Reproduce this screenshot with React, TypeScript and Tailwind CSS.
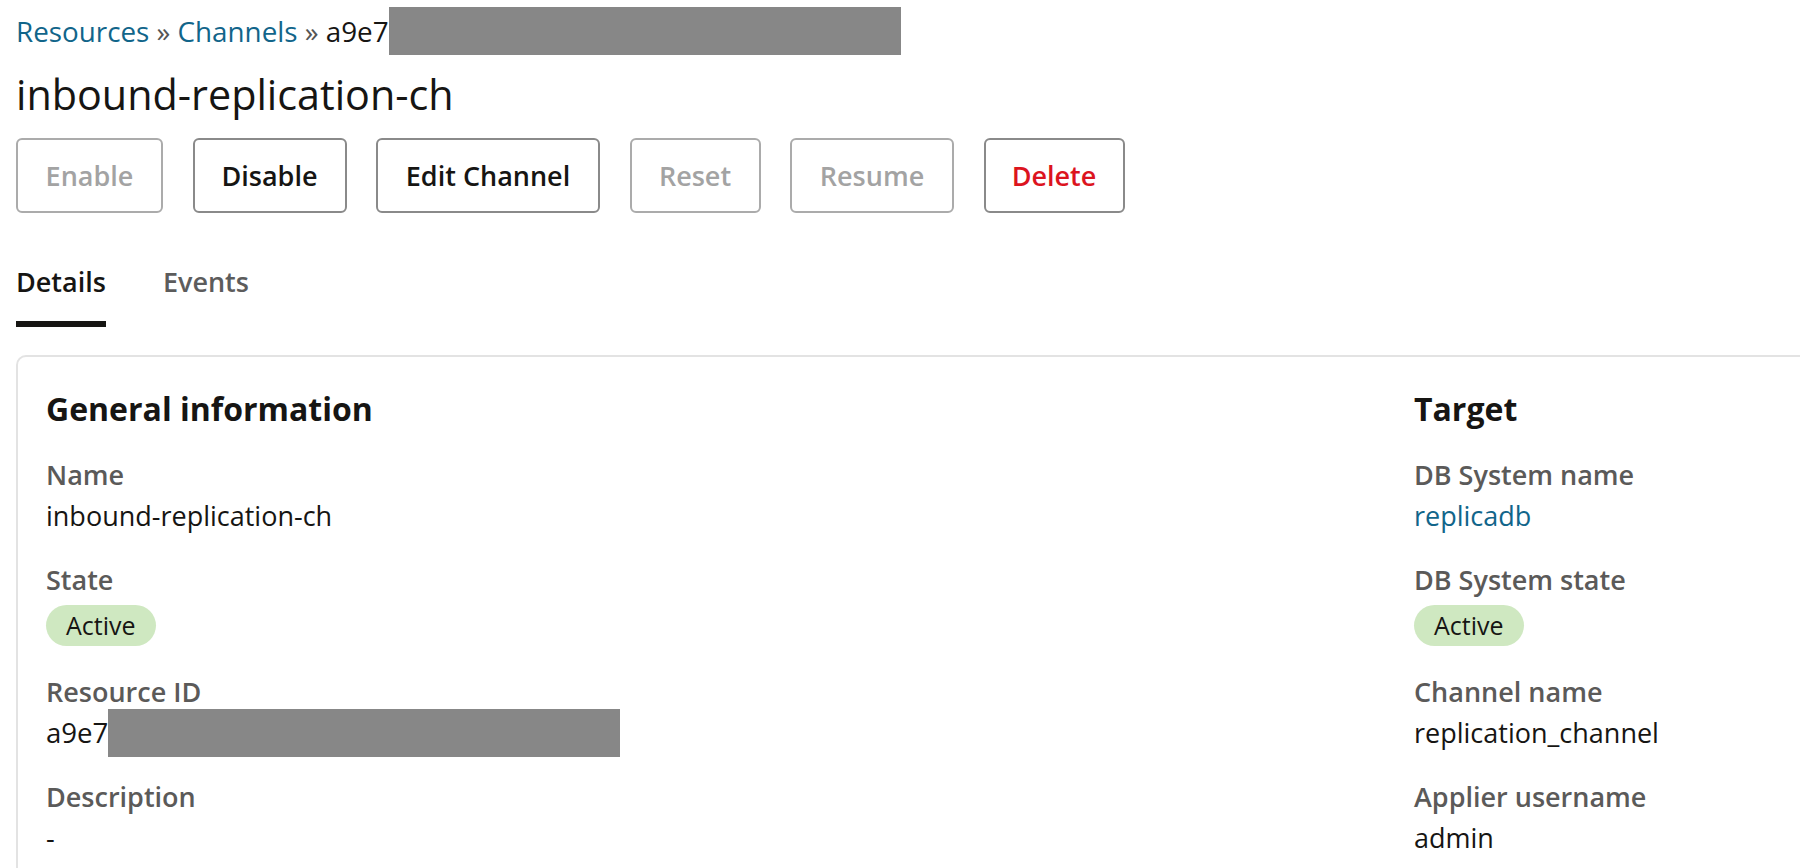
import React from "react";

type Field = { label: string; value?: string; kind?: "text" | "link" | "badge" | "redacted" };

const left: Field[] = [
  { label: "Name", value: "inbound-replication-ch" },
  { label: "State", value: "Active", kind: "badge" },
  { label: "Resource ID", value: "a9e7", kind: "redacted" },
  { label: "Description", value: "-" },
];

const right: Field[] = [
  { label: "DB System name", value: "replicadb", kind: "link" },
  { label: "DB System state", value: "Active", kind: "badge" },
  { label: "Channel name", value: "replication_channel" },
  { label: "Applier username", value: "admin" },
];

function FieldView({ f }: { f: Field }) {
  return (
    <div className="flex flex-col">
      <div className="text-[27px] leading-[41px] font-semibold text-[#5b5a59] whitespace-nowrap">{f.label}</div>
      {f.kind === "badge" ? (
        <div className="mt-[5px] mb-[2px] flex">
          <span className="h-[41px] px-[20px] rounded-full bg-[#cfe8c1] text-[25px] leading-[41px] text-[#161513] flex items-center">
            {f.value}
          </span>
        </div>
      ) : f.kind === "redacted" ? (
        <div className="h-[41px] flex items-center">
          <span className="text-[27.6px] leading-[41px] text-[#161513]">{f.value}</span>
          <span className="h-[48px] w-[512px] bg-[#878787] shrink-0" />
        </div>
      ) : f.kind === "link" ? (
        <div className="text-[27px] leading-[41px] text-[#11658a] whitespace-nowrap">{f.value}</div>
      ) : (
        <div className="text-[27px] leading-[41px] text-[#161513] whitespace-nowrap">{f.value}</div>
      )}
    </div>
  );
}

function Column({ title, fields, className }: { title: string; fields: Field[]; className?: string }) {
  return (
    <div className={className}>
      <div className="text-[32px] leading-[44px] font-bold text-[#161513] whitespace-nowrap">{title}</div>
      <div className="mt-[23px] flex flex-col gap-[23px]">
        {fields.map((f) => (
          <FieldView key={f.label} f={f} />
        ))}
      </div>
    </div>
  );
}

const buttons = [
  { label: "Enable", w: "w-[147px]", state: "disabled" },
  { label: "Disable", w: "w-[154px]", state: "normal" },
  { label: "Edit Channel", w: "w-[224px]", state: "normal" },
  { label: "Reset", w: "w-[131px]", state: "disabled" },
  { label: "Resume", w: "w-[164px]", state: "disabled" },
  { label: "Delete", w: "w-[141px]", state: "danger" },
];

export default function App() {
  return (
    <div className="w-[1800px] h-[868px] overflow-hidden bg-white pl-[16px] font-['Open_Sans',sans-serif] text-[#161513]">
      {/* breadcrumb */}
      <div className="pt-[7px] flex items-start h-[55px]">
        <span className="text-[27.8px] leading-[48px] whitespace-nowrap">
          <span className="text-[#11658a]">Resources</span>
          <span className="text-[#555]"> » </span>
          <span className="text-[#11658a]">Channels</span>
          <span className="text-[#555]"> » </span>
          <span>a9e7</span>
        </span>
        <span className="h-[48px] w-[512px] bg-[#878787] shrink-0" />
      </div>

      {/* title */}
      <h1 className="mt-[13px] text-[41.3px] leading-[52px] font-normal whitespace-nowrap">inbound-replication-ch</h1>

      {/* actions */}
      <div className="mt-[18px] flex gap-[29.5px]">
        {buttons.map((b) => (
          <button
            key={b.label}
            className={
              "h-[75px] rounded-[6px] border-2 bg-white text-[27px] leading-[36px] font-semibold flex items-center justify-center whitespace-nowrap " +
              b.w +
              " " +
              (b.state === "disabled"
                ? "border-[#ababab] text-[#a3a3a3]"
                : b.state === "danger"
                ? "border-[#8a8a8a] text-[#dc141e]"
                : "border-[#8a8a8a] text-[#161513]")
            }
          >
            {b.label}
          </button>
        ))}
      </div>

      {/* tabs */}
      <div className="mt-[51px] flex gap-[57px]">
        <div className="flex flex-col">
          <span className="text-[27px] leading-[36px] font-semibold text-[#161513]">Details</span>
          <span className="mt-[21px] h-[6px] bg-[#161513]" />
        </div>
        <div className="flex flex-col">
          <span className="text-[27px] leading-[36px] font-semibold text-[#5c5c5c]">Events</span>
        </div>
      </div>

      {/* card */}
      <div className="mt-[28px] w-[1820px] h-[700px] border-2 border-[#e3e3e3] rounded-[10px] pt-[30px] pl-[28px] flex">
        <Column title="General information" fields={left} className="w-[1368px] shrink-0" />
        <Column title="Target" fields={right} />
      </div>
    </div>
  );
}
